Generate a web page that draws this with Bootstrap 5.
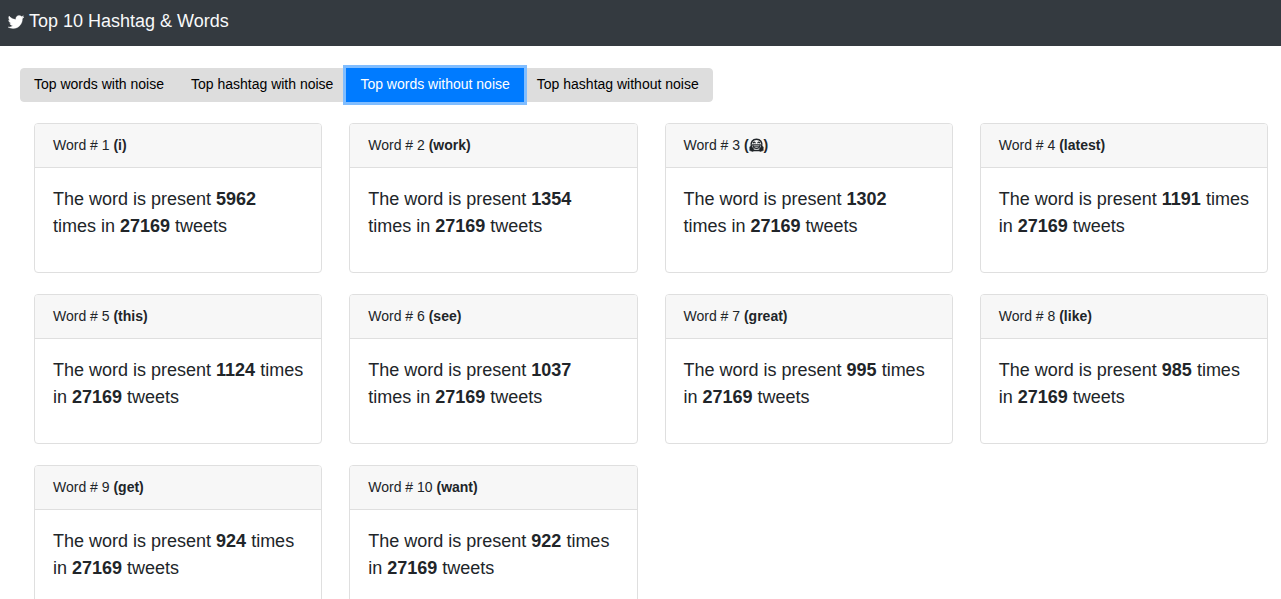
<!DOCTYPE html>
<html lang="en">
<head>
<meta charset="utf-8">
<meta name="viewport" content="width=device-width, initial-scale=1">
<title>Top 10 Hashtag &amp; Words</title>
<link href="https://cdn.jsdelivr.net/npm/bootstrap@5.3.0/dist/css/bootstrap.min.css" rel="stylesheet">
<style>
  body { font-family: "Liberation Sans", Arial, sans-serif; font-size: 14px; color: #212529; }
  .top-bar { background: #343a40; padding: 8px 8px 11px; }
  .top-bar .navbar-brand { font-size: 18px; line-height: 27px; padding: 0; gap: 5px; }
  .filter-area { padding: 22px 20px 21px; }
  .filters .btn { --bs-btn-font-size: 14px; --bs-btn-line-height: 22px; --bs-btn-padding-x: 13px; --bs-btn-border-radius: 4px;
    --bs-btn-color: #000; --bs-btn-bg: #ddd; --bs-btn-border-color: #ddd;
    --bs-btn-hover-bg: #ccc; --bs-btn-hover-color: #000; --bs-btn-active-bg: #007bff; --bs-btn-active-border-color: #007bff; --bs-btn-active-color: #fff;
    padding-top: 4px; padding-bottom: 6px; }
  .filters .btn.active { box-shadow: 0 0 0 3px #80bdff; }
  .words { padding: 0 13px 21px 34px; }
  .words .row { --bs-gutter-x: 27px; --bs-gutter-y: 21px; }
  .word-card { --bs-card-border-radius: 4px; --bs-card-inner-border-radius: 3px; --bs-card-border-color: #dfdfdf; --bs-card-cap-bg: #f7f7f7; min-height: 150px; }
  .word-card .card-header { padding: 11px 18px; line-height: 21px; }
  .word-card .card-body { padding: 18px; font-size: 18px; line-height: 27px; }
  .hug-icon { vertical-align: -2px; }
</style>
</head>
<body>
<nav class="navbar top-bar" data-bs-theme="dark">
  <a class="navbar-brand d-flex align-items-center m-0" href="#">
    <svg width="16" height="16" viewBox="0 0 512 512" fill="#fff" stroke="#fff" stroke-width="10" aria-hidden="true"><path d="M459.400 151.700c.3 4.500.3 9.100.3 13.600 0 138.700-105.600 298.600-298.600 298.600-59.500 0-114.700-17.200-161.100-47.100 8.400 1 16.600 1.300 25.300 1.300 49.100 0 94.200-16.600 130.300-44.800-46.100-1-84.800-31.200-98.100-72.800 6.500 1 13 1.600 19.800 1.600 9.400 0 18.800-1.300 27.600-3.600-48.100-9.700-84.100-52-84.100-103v-1.300c14 7.800 30.200 12.700 47.400 13.300-28.300-18.800-46.800-51-46.800-87.400 0-19.500 5.200-37.400 14.300-53 51.700 63.700 129.300 105.300 216.400 109.800-1.600-7.800-2.600-15.900-2.600-24 0-57.800 46.800-104.900 104.900-104.900 30.200 0 57.500 12.700 76.700 33.100 23.700-4.500 46.500-13.300 66.600-25.300-7.800 24.400-24.400 44.800-46.100 57.800 21.100-2.300 41.600-8.100 60.400-16.200-14.300 20.800-32.200 39.300-52.600 54.300z"/></svg>
    <span>Top 10 Hashtag &amp; Words</span>
  </a>
</nav>
<main>
  <div class="filter-area">
    <div class="btn-group filters" role="group" aria-label="Ranking">
      <button type="button" class="btn">Top words with noise</button>
      <button type="button" class="btn">Top hashtag with noise</button>
      <button type="button" class="btn active" aria-pressed="true">Top words without noise</button>
      <button type="button" class="btn">Top hashtag without noise</button>
    </div>
  </div>
  <div class="words">
    <div class="row row-cols-1 row-cols-sm-2 row-cols-lg-4">
      <div class="col"><div class="card word-card"><div class="card-header">Word # 1 <b>(i)</b></div><div class="card-body">The word is present <b>5962</b> times in <b>27169</b> tweets</div></div></div>
      <div class="col"><div class="card word-card"><div class="card-header">Word # 2 <b>(work)</b></div><div class="card-body">The word is present <b>1354</b> times in <b>27169</b> tweets</div></div></div>
      <div class="col"><div class="card word-card"><div class="card-header">Word # 3 <b>(<svg class="hug-icon" width="15" height="14" viewBox="0 0 15 14" fill="none" stroke="#212529" stroke-width="1.500" stroke-linecap="round" role="img" aria-label="Hugging face"><path d="M2.300 8.500C1.300 4 3.800 1.300 7.500 1.300S13.700 4 12.700 8.500M5 12.600h5"/><path d="M4.200 4.800q1-1.300 2 0M8.800 4.800q1-1.300 2 0" stroke-width="1.200"/><path d="M3.700 6.800h7.600c-.2 2.300-1.800 3.600-3.800 3.600S3.900 9.100 3.700 6.800z" fill="#f7f7f7" stroke-width="1.200"/><path d="M4.500 8.600h6" stroke-width=".8"/><path d="M1 8.800l1.200-.5 2.300 2.200.6 2.200-1.500.7-2.600-.8zM14 8.800l-1.200-.5-2.300 2.200-.6 2.200 1.500.7 2.600-.8z" fill="#212529" stroke-width=".6"/></svg>)</b></div><div class="card-body">The word is present <b>1302</b> times in <b>27169</b> tweets</div></div></div>
      <div class="col"><div class="card word-card"><div class="card-header">Word # 4 <b>(latest)</b></div><div class="card-body">The word is present <b>1191</b> times in <b>27169</b> tweets</div></div></div>
      <div class="col"><div class="card word-card"><div class="card-header">Word # 5 <b>(this)</b></div><div class="card-body">The word is present <b>1124</b> times in <b>27169</b> tweets</div></div></div>
      <div class="col"><div class="card word-card"><div class="card-header">Word # 6 <b>(see)</b></div><div class="card-body">The word is present <b>1037</b> times in <b>27169</b> tweets</div></div></div>
      <div class="col"><div class="card word-card"><div class="card-header">Word # 7 <b>(great)</b></div><div class="card-body">The word is present <b>995</b> times in <b>27169</b> tweets</div></div></div>
      <div class="col"><div class="card word-card"><div class="card-header">Word # 8 <b>(like)</b></div><div class="card-body">The word is present <b>985</b> times in <b>27169</b> tweets</div></div></div>
      <div class="col"><div class="card word-card"><div class="card-header">Word # 9 <b>(get)</b></div><div class="card-body">The word is present <b>924</b> times in <b>27169</b> tweets</div></div></div>
      <div class="col"><div class="card word-card"><div class="card-header">Word # 10 <b>(want)</b></div><div class="card-body">The word is present <b>922</b> times in <b>27169</b> tweets</div></div></div>
    </div>
  </div>
</main>
<script src="https://cdn.jsdelivr.net/npm/bootstrap@5.3.0/dist/js/bootstrap.bundle.min.js"></script>
</body>
</html>
